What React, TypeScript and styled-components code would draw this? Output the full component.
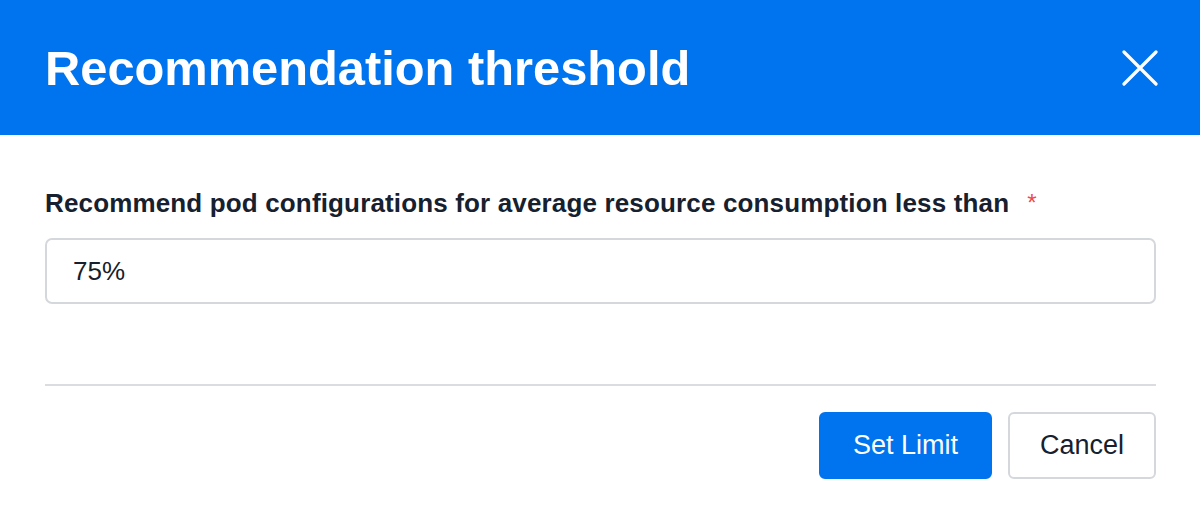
import React from 'react';
import styled, { createGlobalStyle } from 'styled-components';

const GlobalStyle = createGlobalStyle`
  html, body { margin: 0; padding: 0; background: #fff; }
  body { font-family: "Liberation Sans", Arial, sans-serif; }
`;

const Dialog = styled.div`
  width: 1200px;
  height: 506px;
  background: #fff;
  display: flex;
  flex-direction: column;
`;

const Header = styled.header`
  height: 135px;
  background: #0073ee;
  display: flex;
  align-items: center;
  justify-content: space-between;
  padding: 0 40px 0 45px;
  box-sizing: border-box;
`;

const Title = styled.h1`
  margin: 0;
  color: #fff;
  font-size: 48.8px;
  font-weight: 700;
`;

const CloseButton = styled.button`
  width: 40px;
  height: 40px;
  border: none;
  background: transparent;
  padding: 0;
  display: flex;
  align-items: center;
  justify-content: center;
  cursor: pointer;
`;

const Body = styled.div`
  padding: 53px 44px 0 45px;
  display: flex;
  flex-direction: column;
`;

const Label = styled.label`
  color: #16202e;
  font-size: 26px;
  line-height: 30px;
  font-weight: 700;
  letter-spacing: 0.15px;
  display: flex;
  align-items: flex-start;
  gap: 18px;
`;

const Required = styled.span`
  color: #f04a4a;
  font-size: 24px;
  font-weight: 400;
`;

const Input = styled.input`
  margin-top: 20px;
  height: 66px;
  box-sizing: border-box;
  border: 2px solid #d4d7dc;
  border-radius: 7px;
  padding: 0 26px;
  font-family: "Liberation Sans", Arial, sans-serif;
  font-size: 26px;
  color: #16202e;
  outline: none;
`;

const Divider = styled.hr`
  margin: 80px 0 0;
  border: none;
  border-top: 2px solid #dadcdf;
`;

const Footer = styled.div`
  display: flex;
  justify-content: flex-end;
  gap: 16px;
  margin-top: 26px;
`;

const Button = styled.button<{ $primary?: boolean }>`
  height: 67px;
  padding: 0 ${p => (p.$primary ? 32 : 30)}px;
  border-radius: 6px;
  font-family: "Liberation Sans", Arial, sans-serif;
  font-size: 27px;
  box-sizing: border-box;
  cursor: pointer;
  background: ${p => (p.$primary ? '#0073ee' : '#fff')};
  color: ${p => (p.$primary ? '#fff' : '#16202e')};
  border: 2px solid ${p => (p.$primary ? '#0073ee' : '#d4d7dc')};
`;

export default function App() {
  return (
    <>
      <GlobalStyle />
      <Dialog>
        <Header>
          <Title>Recommendation threshold</Title>
          <CloseButton aria-label="Close">
            <svg width="36" height="36" viewBox="0 0 36 36">
              <path d="M2 2 L34 34 M34 2 L2 34" stroke="#fff" strokeWidth="3.2" strokeLinecap="round" />
            </svg>
          </CloseButton>
        </Header>
        <Body>
          <Label>
            Recommend pod configurations for average resource consumption less than
            <Required>*</Required>
          </Label>
          <Input defaultValue="75%" />
          <Divider />
          <Footer>
            <Button $primary>Set Limit</Button>
            <Button>Cancel</Button>
          </Footer>
        </Body>
      </Dialog>
    </>
  );
}
